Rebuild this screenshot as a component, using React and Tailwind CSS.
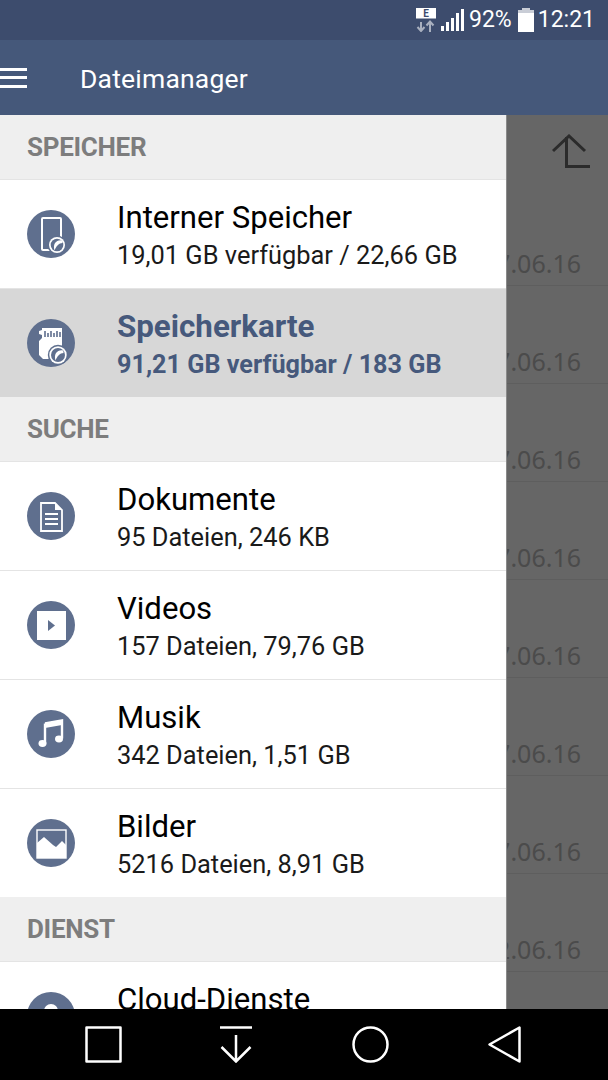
import React from "react";

const font = { fontFamily: "Roboto, sans-serif" };

function Circle({ children }) {
  return (
    <svg width="48" height="48" viewBox="0 0 48 48" className="shrink-0">
      <circle cx="24" cy="24" r="24" fill="#5f6f8e" />
      {children}
    </svg>
  );
}

function Badge({ cx, cy, r }) {
  return (
    <g>
      <circle cx={cx} cy={cy} r={r + 1.5} fill="#5f6f8e" />
      <circle cx={cx} cy={cy} r={r} fill="#fff" />
      <circle cx={cx} cy={cy} r={r - 1.7} fill="#5f6f8e" />
      <path
        d={`M${cx - 2.5} ${cy + 5.5} C${cx - 4.5} ${cy - 1} ${cx - 0.5} ${cy - 5.5} ${cx + 5} ${cy - 4.5} C${cx + 5.5} ${cy - 3.5} ${cx + 5.5} ${cy - 2.5} ${cx + 5.5} ${cy - 2} C${cx + 2} ${cy - 2} ${cx - 1} ${cy + 1.5} ${cx - 2.5} ${cy + 5.5}Z`}
        fill="#fff"
      />
    </g>
  );
}

const PhoneIcon = () => (
  <Circle>
    <rect x="15" y="8" width="19" height="32" rx="1" fill="none" stroke="#fff" strokeWidth="2" />
    <Badge cx={30} cy={35} r={8} />
  </Circle>
);

const CardIcon = () => (
  <Circle>
    <path d="M15 9h20v24H12V22l3-3v-3l-3-1v-3l3-1z" fill="#fff" />
    <path d="M16 40h12V28H12v8z" fill="#fff" />
    <path d="M18 18v-6M21 18v-4M24 18v-6M27 18v-4M30 18v-6M33 18v-5" stroke="#5f6f8e" strokeWidth="1.6" />
    <Badge cx={31} cy={36} r={8.7} />
  </Circle>
);

const DocIcon = () => (
  <Circle>
    <path d="M14 11h14l7 7v21H14z" fill="none" stroke="#fff" strokeWidth="1.8" />
    <path d="M28 11v7h7z" fill="#fff" />
    <path d="M18 22h13M18 27h13M18 32h13" stroke="#fff" strokeWidth="1.8" />
  </Circle>
);

const VideoIcon = () => (
  <Circle>
    <rect x="10" y="10" width="29" height="29" fill="#fff" />
    <path d="M21 19l7 5.500-7 5.500z" fill="#5f6f8e" />
  </Circle>
);

const MusicIcon = () => (
  <Circle>
    <path d="M18 13.500 35 10.500v18" fill="none" stroke="#fff" strokeWidth="2.400" />
    <path d="M18 13.500v20" fill="none" stroke="#fff" strokeWidth="2.400" />
    <path d="M18 13 35 10v5l-17 3z" fill="#fff" />
    <ellipse cx="15.500" cy="33.500" rx="4" ry="3.400" fill="#fff" />
    <ellipse cx="32" cy="29" rx="4" ry="3.400" fill="#fff" />
  </Circle>
);

const ImageIcon = () => (
  <Circle>
    <rect x="10" y="11" width="29" height="28" fill="none" stroke="#fff" strokeWidth="1.400" />
    <path d="M10 24l7-6 9 8 3 2 6-6 4 4v13H10z" fill="#fff" />
  </Circle>
);

const CloudIcon = () => (
  <Circle>
    <circle cx="24" cy="19" r="7" fill="#fff" />
  </Circle>
);

function SectionHeader({ label }) {
  return (
    <div className="h-[65px] shrink-0 flex items-center pl-[27px] pt-[1px] bg-[#efefef] border-b border-[#e4e4e4] text-[26px] font-bold text-[#7d7d7d] tracking-[-0.3px]">
      {label}
    </div>
  );
}

function Row({ icon, title, sub, active, last }) {
  const height = last ? "h-[108px]" : "h-[109px] border-b border-[#e4e4e4]";
  const bg = active ? "bg-[#d7d7d7]" : "bg-white";
  return (
    <div className={`${height} ${bg} shrink-0 flex items-center pl-[27px] pb-[1px] gap-[42px]`}>
      {icon}
      <div className="flex flex-col mt-[6px]">
        <div className={active ? "text-[31.300px] leading-[38px] font-bold text-[#46597c]" : "text-[31.100px] leading-[38px] text-black"}>
          {title}
        </div>
        <div className={active ? "text-[25.200px] leading-[37px] min-h-[37px] font-bold text-[#46597c]" : "text-[25.400px] leading-[37px] min-h-[37px] text-[#1a1a1a]"}>
          {sub}
        </div>
      </div>
    </div>
  );
}

function DateRow({ text }) {
  return (
    <div
      className="h-[98px] shrink-0 flex items-end justify-end pr-[27px] pb-[3px] border-b border-[#5e5e5e] text-[25px] text-[#4b4b4b] whitespace-nowrap"
      style={{ fontFamily: '"Noto Sans", sans-serif' }}
    >
      {text}
    </div>
  );
}

export default function App() {
  const dates = ["27.06.16", "27.06.16", "27.06.16", "27.06.16", "27.06.16", "27.06.16", "27.06.16", "22.06.16"];

  return (
    <div className="w-[608px] h-[1080px] overflow-hidden flex flex-col bg-[#666666]" style={font}>
      {/* status bar */}
      <div className="h-[40px] shrink-0 bg-[#3d4c6d] flex items-center justify-end pr-[13px] text-white text-[23px]">
        <svg width="22" height="24" viewBox="0 0 22 24" className="mr-[4px]">
          <rect x="1" y="0" width="20" height="10.500" fill="#fff" />
          <text x="11" y="9" textAnchor="middle" fontSize="10" fontWeight="700" fill="#3d4c6d" fontFamily="Roboto, sans-serif">E</text>
          <path d="M6 23v-9M2.500 19l3.500 4 3.500-4" stroke="#a9b0bf" strokeWidth="2" fill="none" />
          <path d="M15 24v-10M11.500 17.500l3.500-4 3.500 4" stroke="#a9b0bf" strokeWidth="2" fill="none" />
        </svg>
        <svg width="25" height="24" viewBox="0 0 25 24" className="mr-[3px]">
          <rect x="0" y="18" width="3" height="5" fill="#fff" />
          <rect x="5" y="14" width="3" height="9" fill="#fff" />
          <rect x="10" y="10" width="3" height="13" fill="#fff" />
          <rect x="15" y="5" width="3" height="18" fill="#fff" />
          <rect x="20" y="1" width="3" height="22" fill="#fff" />
        </svg>
        <span className="mr-[6px]">92%</span>
        <svg width="16" height="24" viewBox="0 0 16 24" className="mr-[4px]">
          <rect x="4" y="0" width="8" height="3" fill="#c9cdd6" />
          <rect x="0" y="2" width="16" height="3" fill="#c9cdd6" />
          <rect x="0" y="5" width="16" height="19" fill="#fff" />
        </svg>
        <span>12:21</span>
      </div>

      {/* app bar */}
      <div className="h-[75px] shrink-0 bg-[#45587a] flex items-center text-white">
        <div className="w-[27px] h-[20px] flex flex-col justify-between">
          <div className="h-[3px] bg-white" />
          <div className="h-[3px] bg-white" />
          <div className="h-[3px] bg-white" />
        </div>
        <div className="ml-[53px] mt-[3px] text-[26.500px] tracking-[0.2px]">Dateimanager</div>
      </div>

      <div className="flex-1 min-h-0 flex overflow-hidden">
        {/* drawer */}
        <div className="w-[506px] shrink-0 flex flex-col overflow-hidden bg-white">
          <SectionHeader label="SPEICHER" />
          <Row icon={<PhoneIcon />} title="Interner Speicher" sub="19,01 GB verfügbar / 22,66 GB" />
          <Row icon={<CardIcon />} title="Speicherkarte" sub="91,21 GB verfügbar / 183 GB" active last />
          <SectionHeader label="SUCHE" />
          <Row icon={<DocIcon />} title="Dokumente" sub="95 Dateien, 246 KB" />
          <Row icon={<VideoIcon />} title="Videos" sub="157 Dateien, 79,76 GB" />
          <Row icon={<MusicIcon />} title="Musik" sub="342 Dateien, 1,51 GB" />
          <Row icon={<ImageIcon />} title="Bilder" sub="5216 Dateien, 8,91 GB" last />
          <SectionHeader label="DIENST" />
          <Row icon={<CloudIcon />} title="Cloud-Dienste" sub="" last />
        </div>

        {/* file list behind the scrim */}
        <div className="flex-1 min-w-0 overflow-hidden flex flex-col border-l border-[#8a8a8a]">
          <div className="h-[73px] shrink-0 flex items-start justify-end pr-[18px] pt-[19px]">
            <svg width="38" height="34" viewBox="0 0 38 34" fill="none" stroke="#2b2b2b" strokeWidth="3">
              <path d="M1 17 17 2l16 15" />
              <path d="M14.500 3v29.500H38" />
            </svg>
          </div>
          {dates.map((d, i) => (
            <DateRow key={i} text={d} />
          ))}
        </div>
      </div>

      {/* nav bar */}
      <div className="h-[71px] shrink-0 bg-black flex items-center pl-[85px] pb-[1px]">
        <svg width="37" height="37" viewBox="0 0 37 37" fill="none" stroke="#fff" strokeWidth="2.500" strokeLinejoin="round">
          <rect x="1.500" y="1.500" width="34" height="34" />
        </svg>
        <svg width="34" height="37" viewBox="0 0 34 37" fill="none" stroke="#fff" strokeWidth="2.500" className="ml-[97px]">
          <path d="M1 1.500h32" />
          <path d="M17 9v26M2.500 21 17 35.500 31.500 21" />
        </svg>
        <svg width="37" height="37" viewBox="0 0 37 37" fill="none" stroke="#fff" strokeWidth="2.500" className="ml-[99px]">
          <circle cx="18.500" cy="18.500" r="17" />
        </svg>
        <svg width="33" height="37" viewBox="0 0 33 37" fill="none" stroke="#fff" strokeWidth="2.500" strokeLinejoin="round" className="ml-[99px]">
          <path d="M31.500 1.500v34L1.500 18.500z" />
        </svg>
      </div>
    </div>
  );
}
